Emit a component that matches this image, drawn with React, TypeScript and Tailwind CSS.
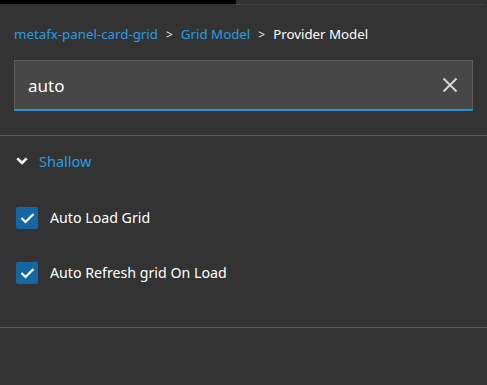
import React from "react";

export default function App() {
  const font = { fontFamily: '"Noto Sans", "Open Sans", sans-serif' };
  return (
    <div className="relative w-[487px] h-[385px] bg-[#333333] overflow-hidden" style={font}>
      <div className="flex h-[5px]">
        <div className="w-[236px] h-[4px] bg-black" />
        <div className="flex-1 mt-[4px] w-[248px] h-px border-t border-dotted border-[#555555]" />
        <div className="w-[3px]" />
      </div>
      <div className="flex items-center pl-[14px] pt-[18px] h-[41px] text-[13.3px] leading-none">
        <span className="text-[#2d9be0]">metafx-panel-card-grid</span>
        <span className="text-[#e6e6e6] mx-[8px] text-[12px]">&gt;</span>
        <span className="text-[#2d9be0]">Grid Model</span>
        <span className="text-[#e6e6e6] mx-[8px] text-[12px]">&gt;</span>
        <span className="text-white">Provider Model</span>
      </div>
      <div className="px-[14px] mt-[14px]">
        <div className="flex items-center h-[51px] bg-[#474747] border border-[#5e5e5e] border-b-2 border-b-[#2a95d2] pl-[13px] pr-[14px]">
          <span className="flex-1 text-white text-[17px] leading-none">auto</span>
          <svg width="16" height="16" viewBox="0 0 16 16" className="text-[#cfd6dc]">
            <path d="M1.5 1.5 L14.5 14.5 M14.5 1.5 L1.5 14.5" stroke="currentColor" strokeWidth="2" />
          </svg>
        </div>
      </div>
      <div className="mt-[24px] h-px bg-[#5a5a5a]" />
      <div className="flex items-center pl-[16px] mt-[17px] h-[16px]">
        <svg width="12" height="8" viewBox="0 0 12 8" className="text-white">
          <path d="M1.3 1.3 L6 6 L10.7 1.3" stroke="currentColor" strokeWidth="2.6" fill="none" />
        </svg>
        <span className="ml-[11px] text-[#2d9be0] text-[14.5px] leading-none">Shallow</span>
      </div>
      <div className="flex flex-col gap-[33px] mt-[38px] pl-[16px]">
        {["Auto Load Grid", "Auto Refresh grid On Load"].map((t) => (
          <div key={t} className="flex items-center h-[22px]">
            <div className="w-[22px] h-[22px] rounded-[2px] bg-[#1467a3] flex items-center justify-center">
              <svg width="15" height="12" viewBox="0 0 15 12">
                <path d="M1.5 6 L5.5 10 L13.5 2" stroke="white" strokeWidth="2.2" fill="none" />
              </svg>
            </div>
            <span className="ml-[12px] text-white text-[14.2px] leading-none">{t}</span>
          </div>
        ))}
      </div>
      <div className="mt-[43px] h-px bg-[#5a5a5a]" />
    </div>
  );
}
